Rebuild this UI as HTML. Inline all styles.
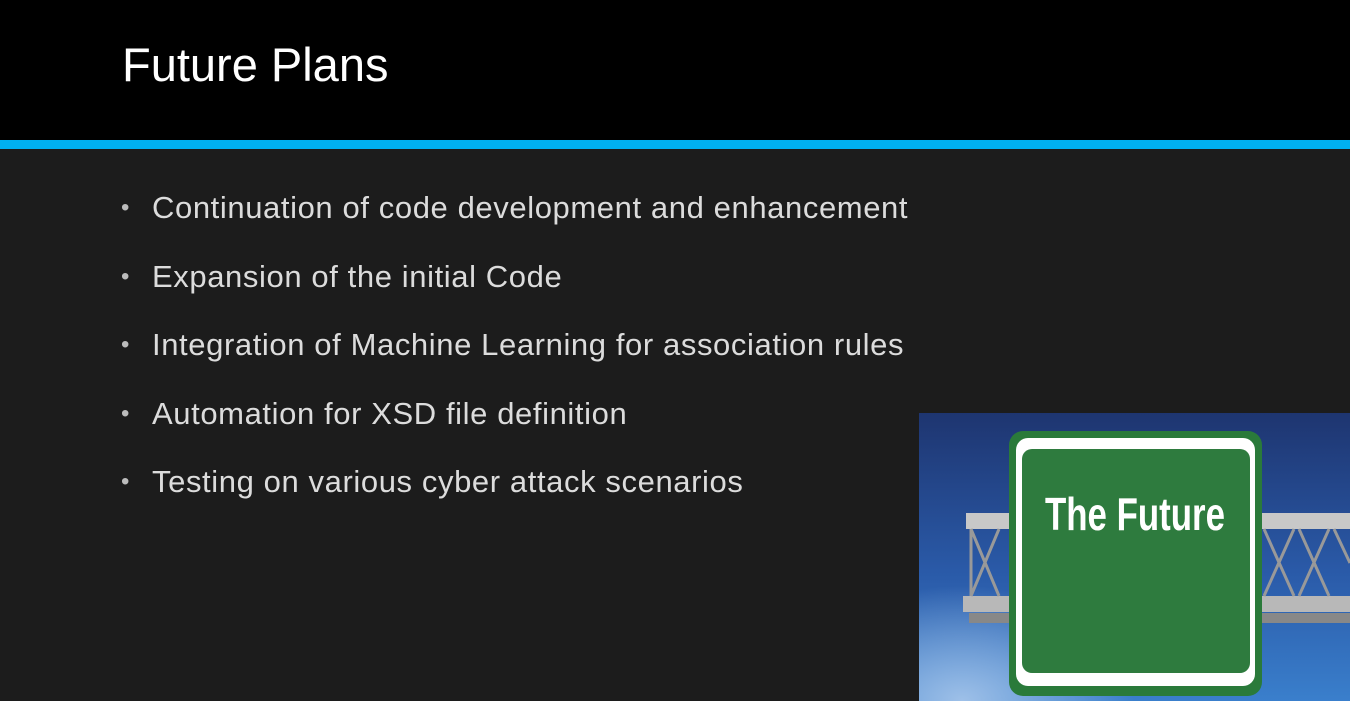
<!DOCTYPE html>
<html><head><style>
html,body{margin:0;padding:0}
body{width:1350px;height:701px;background:#1c1c1c;position:relative;overflow:hidden;font-family:"Liberation Sans",sans-serif}
.hdr{position:absolute;left:0;top:0;width:1350px;height:140px;background:#000}
.bar{position:absolute;left:0;top:140px;width:1350px;height:9px;background:#00b0f0}
h1{position:absolute;left:122px;top:38px;margin:0;font-weight:normal;font-size:47px;color:#fff;line-height:54px}
.li{position:absolute;left:152px;font-size:31px;color:#dcdcdc;line-height:36px;white-space:nowrap;letter-spacing:0.6px}
.li:before{content:"•";position:absolute;left:-31px;color:#bcbcbc;font-size:24px}
.img{position:absolute;left:919px;top:413px;width:431px;height:288px;overflow:hidden;background:linear-gradient(#1e3570,#2a5aa8 55%,#3a7fcc)}
</style></head><body>
<div class="hdr"></div><div class="bar"></div>
<h1>Future Plans</h1>
<div class="li" style="top:190px">Continuation of code development and enhancement</div>
<div class="li" style="top:259px">Expansion of the initial Code</div>
<div class="li" style="top:327px">Integration of Machine Learning for association rules</div>
<div class="li" style="top:396px">Automation for XSD file definition</div>
<div class="li" style="top:464px">Testing on various cyber attack scenarios</div>
<div class="img">
<svg width="431" height="288" viewBox="0 0 431 288">
<defs><radialGradient id="c" cx="0.1" cy="1" r="0.4"><stop offset="0" stop-color="#9ec0e8"/><stop offset="1" stop-color="#9ec0e8" stop-opacity="0"/></radialGradient></defs>
<rect width="431" height="288" fill="url(#c)"/>
<rect x="47" y="100" width="384" height="16" fill="#c8c8c8"/>
<rect x="44" y="183" width="387" height="16" fill="#b8b8b8"/>
<g stroke="#999" stroke-width="3" fill="none">
<path d="M52 116 L80 183 M80 116 L52 183 M52 116 V183"/>
<path d="M345 116 L375 183 M375 116 L345 183 M380 116 L410 183 M410 116 L380 183 M415 116 L431 150"/>
</g>
<rect x="50" y="200" width="381" height="10" fill="#888"/>
<rect x="90" y="18" width="253" height="265" rx="14" fill="#2a7a3a"/>
<rect x="97" y="25" width="239" height="248" rx="12" fill="#fff"/>
<rect x="103" y="36" width="228" height="224" rx="10" fill="#2e7b3e"/>
<text x="126" y="117" font-family="Liberation Sans Narrow,Liberation Sans,sans-serif" font-weight="bold" font-size="46" fill="#fff" textLength="180" lengthAdjust="spacingAndGlyphs">The Future</text>
</svg>
</div>
</body></html>
